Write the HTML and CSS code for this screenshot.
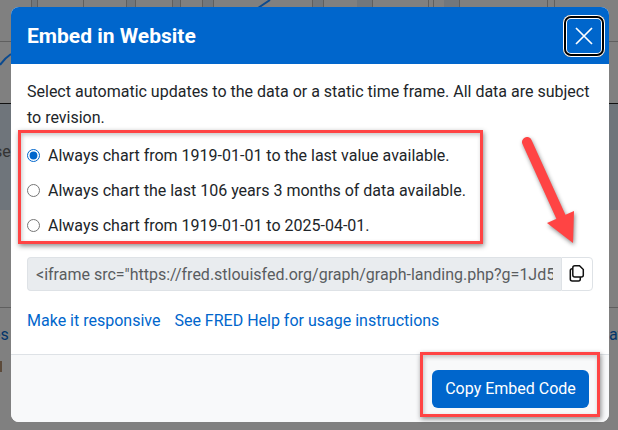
FILE: index.html
```html
<!DOCTYPE html>
<html lang="en">
<head>
<meta charset="utf-8">
<title>Embed in Website</title>
<link rel="stylesheet" href="styles.css">
</head>
<body>
<svg class="backdrop" width="618" height="430" viewBox="0 0 618 430" aria-hidden="true">
  <rect class="bd-upper" x="0" y="104" width="618" height="106"/>
  <path class="bd-band" d="M31 0H37V7H31ZM126 0H135V7H126ZM172 0H180V7H172ZM202 0H213V7H202ZM312 0H323V7H312ZM357 0H372V7H357ZM444 0H459V7H444Z"/>
  <g class="bd-grid">
    <path d="M31.500 0V7M37.500 0V7M83.500 0V7M126.500 0V7M135.500 0V7M172.500 0V7M180.500 0V7M202.500 0V7M213.500 0V7M312.500 0V7M323.500 0V7M372.500 0V7M428.500 0V7M433.500 0V7M459.500 0V7M547.500 0V7M554.500 0V7"/>
    <path d="M0 41.500H11M609 41.500H618M0 307.500H11M609 307.500H618"/>
  </g>
  <path class="bd-black" d="M0 103.500H11M609 103.500H618"/>
  <path class="bd-curve" d="M258 8L270 0M0 65Q5 58 11 54"/>
  <text class="bd-text" x="-6" y="157">se</text>
  <text class="bd-link" x="-8" y="340">es</text>
  <text class="bd-link" x="609" y="340">at</text>
  <rect class="bd-brown" x="0" y="361" width="2" height="11"/>
</svg>

<div class="modal" role="dialog">
  <header class="modal-header">
    <h2 class="modal-title">Embed in Website</h2>
    <button class="close" type="button" aria-label="Close">
      <svg width="18" height="18" viewBox="0 0 18 18"><path d="M1 1L17 17M17 1L1 17"/></svg>
    </button>
  </header>
  <div class="modal-body">
    <p class="intro">Select automatic updates to the data or a static time frame. All data are subject to revision.</p>
    <div class="options">
      <label class="option"><input type="radio" name="range" checked><span>Always chart from 1919-01-01 to the last value available.</span></label>
      <label class="option"><input type="radio" name="range"><span>Always chart the last 106 years 3 months of data available.</span></label>
      <label class="option"><input type="radio" name="range"><span>Always chart from 1919-01-01 to 2025-04-01.</span></label>
    </div>
    <div class="input-group">
      <input class="code" type="text" readonly value="&lt;iframe src=&quot;https://fred.stlouisfed.org/graph/graph-landing.php?g=1Jd5x&amp;width=670&amp;height=475&quot;">
      <button class="copy" type="button" aria-label="Copy">
        <svg width="16" height="17" viewBox="0 0 16 17"><path d="M3.800 2.800Q3.800 .8 5.800 .8H10.500L14.300 4.500V10Q14.300 12 12.300 12H5.800Q3.800 12 3.800 10V2.800Z"/><path d="M3.800 3.800H3.200Q1.300 3.800 1.300 5.800V14Q1.300 16 3.200 16H9.500Q11.300 16 11.300 14V12"/></svg>
      </button>
    </div>
    <div class="links">
      <a href="#">Make it responsive</a>
      <a href="#">See FRED Help for usage instructions</a>
    </div>
  </div>
  <footer class="modal-footer">
    <button class="primary" type="button">Copy Embed Code</button>
  </footer>
</div>

<div class="mark mark-options"></div>
<div class="mark mark-button"></div>
<svg class="arrow" width="618" height="430" viewBox="0 0 618 430" aria-hidden="true">
  <path d="M527 142L561 217" class="arrow-shaft"/>
  <path d="M574 211L573 243L547 223Z" class="arrow-head"/>
</svg>
</body>
</html>
```

FILE: styles.css
```css
* { box-sizing: border-box; }
html, body { margin: 0; height: 100%; }
body {
  width: 618px;
  height: 430px;
  overflow: hidden;
  position: relative;
  background: #808080;
  font-family: Roboto, "Liberation Sans", sans-serif;
  font-size: 16px;
  line-height: 24px;
  color: #212529;
}
.backdrop { position: absolute; left: 0; top: 0; }
.bd-upper { fill: #6f757b; }
.bd-band { fill: #72777c; }
.bd-grid path { stroke: #5f5f5f; stroke-width: 1; fill: none; }
.bd-black { stroke: #111; stroke-width: 1; }
.bd-curve { stroke: #0b4a8f; stroke-width: 2; fill: none; }
.bd-text { font-size: 16px; fill: #333; }
.bd-link { font-size: 16px; fill: #03356a; }
.bd-brown { fill: #5c4a3a; }

.modal {
  position: absolute;
  left: 11px;
  top: 7px;
  width: 598px;
  height: 415px;
  background: #fff;
  border-radius: 8px;
  overflow: hidden;
  display: flex;
  flex-direction: column;
}
.modal-header {
  height: 57px;
  flex: none;
  background: #0066cc;
  display: flex;
  align-items: center;
  justify-content: space-between;
  padding: 1px 4px 0 16px;
}
.modal-title {
  margin: 0;
  font-size: 21px;
  font-weight: 700;
  line-height: 24px;
  color: #fff;
}
.close {
  width: 42px;
  height: 42px;
  padding: 0;
  background: #0066cc;
  border: 0;
  border-radius: 8px;
  box-shadow: inset 0 0 0 1px #fff, inset 0 0 0 3px #000, inset 0 0 0 4px #fff;
  display: flex;
  align-items: center;
  justify-content: center;
}
.close svg path { stroke: #fff; stroke-width: 1.7; fill: none; }

.modal-body {
  flex: 1;
  padding: 15px 16px 0;
}
.intro { margin: 0 0 13px; line-height: 26px; }
.options {
  display: flex;
  flex-direction: column;
  gap: 11px;
  margin-bottom: 19px;
}
.option {
  display: flex;
  align-items: center;
  height: 24px;
}
.option input {
  width: 13px;
  height: 13px;
  margin: 0 8px 0 0;
  accent-color: #0066cc;
  flex: none;
  position: relative;
  top: -1px;
}
.input-group { display: flex; height: 34px; }
.code {
  flex: 1;
  min-width: 0;
  height: 34px;
  border: 1px solid #dee2e6;
  border-right: 0;
  border-radius: 4px 0 0 4px;
  background: #e9ecef;
  color: #595c5f;
  font: 16px/20px Roboto, "Liberation Sans", sans-serif;
  padding: 0 8px;
  outline: none;
}
.copy {
  width: 32px;
  flex: none;
  height: 34px;
  padding: 0;
  background: #fff;
  border: 1px solid #dee2e6;
  border-radius: 0 4px 4px 0;
  display: flex;
  align-items: center;
  justify-content: center;
}
.copy svg { margin-top: -1px; }
.copy svg path { stroke: #111; stroke-width: 1.500; fill: none; }
.links {
  margin-top: 18px;
  display: flex;
  gap: 14px;
}
.links a { color: #0066cc; text-decoration: none; }
.modal-footer {
  height: 68px;
  flex: none;
  background: #f8f9fa;
  border-top: 1px solid #dee2e6;
  display: flex;
  align-items: center;
  justify-content: flex-end;
  padding: 0 20px 0 0;
}
.primary {
  width: 157px;
  height: 38px;
  background: #0066cc;
  color: #fff;
  border: 0;
  border-radius: 6px;
  font: 16px/24px Roboto, "Liberation Sans", sans-serif;
  padding: 0;
}

.mark {
  position: absolute;
  border: 3px solid #ff4444;
  box-shadow: 1px 2px 5px rgba(0, 0, 0, .45), inset 1px 2px 4px rgba(0, 0, 0, .22);
}
.mark-options { left: 18px; top: 130px; width: 465px; height: 114px; }
.mark-button { left: 420px; top: 352px; width: 180px; height: 65px; }
.arrow { position: absolute; left: 0; top: 0; filter: drop-shadow(1px 2px 2px rgba(0, 0, 0, .45)); }
.arrow-shaft { stroke: #ff4444; stroke-width: 10; stroke-linecap: round; fill: none; }
.arrow-head { fill: #ff4444; }
```
